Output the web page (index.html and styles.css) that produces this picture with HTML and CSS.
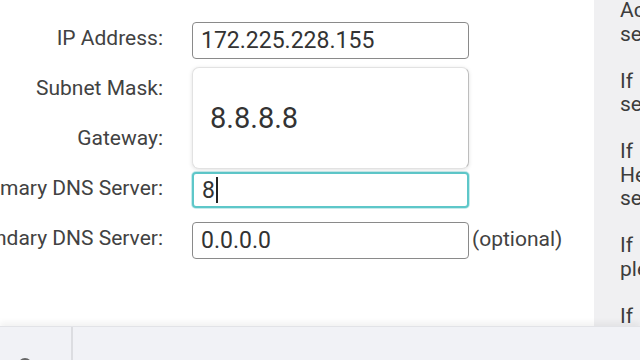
FILE: index.html
```html
<!DOCTYPE html>
<html lang="en">
<head>
    <meta charset="UTF-8">
    <meta name="viewport" content="width=device-width, initial-scale=1.0">
    <title>Internet - Static IP</title>
    <link rel="stylesheet" href="styles.css">
</head>
<body>
    <div class="main">
        <div class="content">
            <div class="form">
                <div class="label">IP Address:</div>
                <div class="field">172.225.228.155</div>
                <div></div>

                <div class="label">Subnet Mask:</div>
                <div class="field"></div>
                <div></div>

                <div class="label">Gateway:</div>
                <div class="field"></div>
                <div></div>

                <div class="label">Primary DNS Server:</div>
                <div class="field-wrap">
                    <div class="field focused">8<span class="caret"></span></div>
                    <div class="suggest">
                        <div class="suggest-item">8.8.8.8</div>
                    </div>
                </div>
                <div></div>

                <div class="label">Secondary DNS Server:</div>
                <div class="field">0.0.0.0</div>
                <div class="hint">(optional)</div>
            </div>
        </div>

        <div class="help">
            <p>Accept the settings provided by your ISP,<br>select Dynamic IP for this connection.</p>
            <p>If your ISP provides a fixed IP address,<br>select Static IP and enter the details.</p>
            <p>If your ISP uses PPPoE,<br>Here you enter the user name and password<br>select PPPoE from the list above.</p>
            <p>If you are not sure which type to use,<br>please contact your ISP for help.</p>
            <p>If you change these settings, click Save.</p>
        </div>
    </div>

    <div class="bottom">
        <div class="bottom-left">
            <svg class="bottom-icon" width="16" height="16" viewBox="0 0 16 16">
                <circle cx="8" cy="8" r="6" fill="none" stroke="#666" stroke-width="2"/>
            </svg>
        </div>
        <div class="bottom-rest"></div>
    </div>
</body>
</html>
```

FILE: styles.css
```css
html, body {
    margin: 0;
    padding: 0;
}
body {
    width: 640px;
    height: 360px;
    overflow: hidden;
    font-family: Roboto, "Liberation Sans", sans-serif;
    background: white;
    display: flex;
    flex-direction: column;
}
.main {
    height: 326px;
    display: flex;
}
.content {
    flex: 1;
    background: white;
    padding-top: 22px;
    min-width: 0;
}
.form {
    display: grid;
    grid-template-columns: 163px 277px auto;
    grid-auto-rows: 37px;
    column-gap: 29px;
    row-gap: 13px;
    align-items: center;
}
.label {
    display: flex;
    justify-content: flex-end;
    white-space: nowrap;
    font-size: 21px;
    color: #424242;
    margin-bottom: 6px;
}
.field {
    box-sizing: border-box;
    height: 37px;
    border: 1.5px solid #8a8a8a;
    border-radius: 4px;
    padding-left: 8px;
    display: flex;
    align-items: center;
    font-size: 23px;
    color: #333;
    background: white;
}
.field-wrap {
    position: relative;
    height: 37px;
}
.field.focused {
    height: 36px;
    border: 2px solid #5ec7c9;
    box-shadow: 0 0 0 1px rgba(94, 199, 201, 0.35);
    padding-left: 8px;
}
.caret {
    display: inline-block;
    width: 2px;
    height: 26px;
    background: #222;
    margin-left: 1px;
}
.suggest {
    position: absolute;
    left: 0;
    right: 0;
    bottom: calc(100% + 3px);
    height: 102px;
    box-sizing: border-box;
    background: white;
    border: 1px solid #e2e2e2;
    border-right-color: #bdbdbd;
    border-radius: 7px;
    box-shadow: 0 1px 4px rgba(0, 0, 0, 0.12);
    display: flex;
    align-items: center;
}
.suggest-item {
    padding-left: 17px;
    font-size: 29px;
    color: #333;
}
.hint {
    margin-left: -26px;
    font-size: 21px;
    color: #424242;
    margin-bottom: 4px;
}
.help {
    box-sizing: border-box;
    width: 46px;
    flex-shrink: 0;
    background: #f0f0f2;
    padding-left: 26px;
    overflow: hidden;
    white-space: nowrap;
    font-size: 21px;
    line-height: 23.5px;
    word-spacing: 8px;
    color: #3c3c3c;
}
.help p {
    margin: -1px 0 24.5px 0;
}
.bottom {
    flex: 1;
    display: flex;
    background: #f1f2f6;
    border-top: 1px solid #e2e3e7;
    box-shadow: 0 -4px 6px rgba(0, 0, 0, 0.05);
    position: relative;
}
.bottom-left {
    width: 71px;
    border-right: 2px solid #dcdde1;
    position: relative;
}
.bottom-icon {
    position: absolute;
    left: 17px;
    top: 30px;
}
.bottom-rest {
    flex: 1;
}
```
